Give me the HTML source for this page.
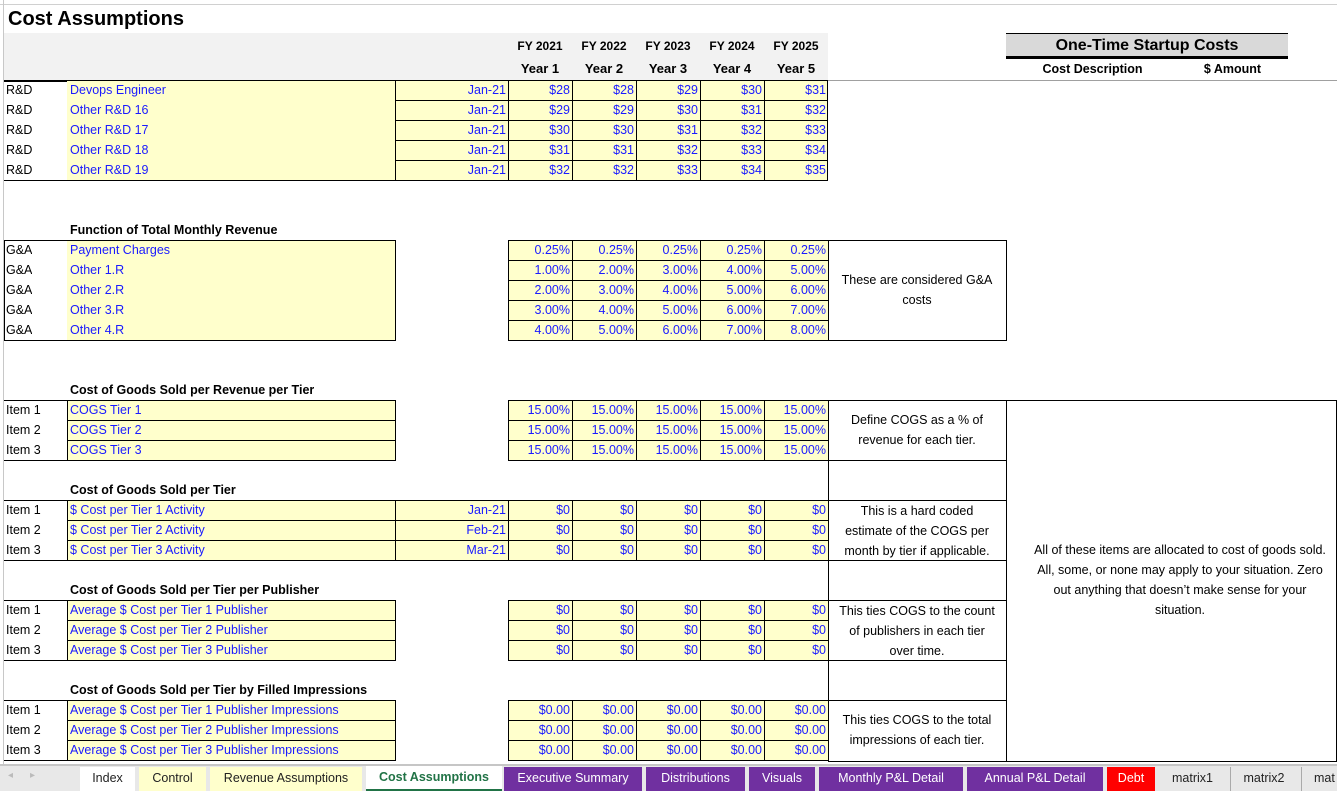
<!DOCTYPE html>
<html><head><meta charset="utf-8"><style>
*{margin:0;padding:0;box-sizing:border-box}
body{width:1337px;height:791px;overflow:hidden;background:#fff;position:relative;font-family:"Liberation Sans",Arial,sans-serif;font-size:12.5px;color:#000}
div{position:absolute}
.t{height:20px;line-height:19px;white-space:nowrap;overflow:hidden}
.y{background:#ffffcc}
.b{border:1px solid #000}
.bl{color:#1a1aff}
.r{text-align:right;padding-right:2px}
.h{font-weight:bold;font-size:12.5px}
.cal{font-family:"Liberation Sans",sans-serif;font-size:12.5px;text-align:center;line-height:20px}
.ln{background:#000;height:1px}
.vl{background:#000;width:1px}
.tab{top:767px;height:24px;line-height:23px;text-align:center;font-size:12.5px;color:#222}
.p{background:#7030a0;color:#fff}
</style></head><body>
<!-- top gridline remnants -->
<div style="left:0;top:0;width:1337px;height:5px;background:#fff;border-bottom:1px solid #d0d0d0"></div>
<div style="left:3;top:0;width:1px;height:765px;background:#c8c8c8;left:3px"></div>
<div class="h" style="left:8px;top:6px;font-size:20px;line-height:26px">Cost Assumptions</div>
<!-- header band -->
<div style="left:4px;top:33px;width:824px;height:47px;background:#f2f2f2"></div>
<div class="ln" style="left:4px;top:80px;width:824px;height:2px"></div>
<div style="left:828px;top:80px;width:509px;height:1px;background:#a0a0a0"></div>
<div class="h" style="left:508px;top:39px;width:64px;text-align:center;font-size:12px">FY 2021</div>
<div class="h" style="left:572px;top:39px;width:64px;text-align:center;font-size:12px">FY 2022</div>
<div class="h" style="left:636px;top:39px;width:64px;text-align:center;font-size:12px">FY 2023</div>
<div class="h" style="left:700px;top:39px;width:64px;text-align:center;font-size:12px">FY 2024</div>
<div class="h" style="left:764px;top:39px;width:64px;text-align:center;font-size:12px">FY 2025</div>
<div class="h" style="left:508px;top:61px;width:64px;text-align:center;font-size:13px">Year 1</div>
<div class="h" style="left:572px;top:61px;width:64px;text-align:center;font-size:13px">Year 2</div>
<div class="h" style="left:636px;top:61px;width:64px;text-align:center;font-size:13px">Year 3</div>
<div class="h" style="left:700px;top:61px;width:64px;text-align:center;font-size:13px">Year 4</div>
<div class="h" style="left:764px;top:61px;width:64px;text-align:center;font-size:13px">Year 5</div>
<!-- one-time -->
<div style="left:1006px;top:33px;width:282px;height:26px;background:#d9d9d9;border-top:1px solid #000;border-bottom:3px solid #000;text-align:center;font-weight:bold;font-size:16px;line-height:24px">One-Time Startup Costs</div>
<div class="h" style="left:1020px;top:62px;width:145px;text-align:center;font-size:12.5px">Cost Description</div>
<div class="h" style="left:1170px;top:62px;width:125px;text-align:center;font-size:12.5px">$ Amount</div>

<!-- R&D block -->
<div class="y" style="left:67px;top:81px;width:761px;height:100px"></div>
<div class="ln" style="left:4px;top:180px;width:824px"></div>
<div class="vl" style="left:395px;top:81px;height:100px"></div>
<div class="vl" style="left:508px;top:81px;height:100px"></div>
<div class="vl" style="left:572px;top:81px;height:100px"></div>
<div class="vl" style="left:636px;top:81px;height:100px"></div>
<div class="vl" style="left:700px;top:81px;height:100px"></div>
<div class="vl" style="left:764px;top:81px;height:100px"></div>
<div class="vl" style="left:827px;top:81px;height:100px"></div>
<div class="ln" style="left:395px;top:100px;width:433px"></div>
<div class="ln" style="left:395px;top:120px;width:433px"></div>
<div class="ln" style="left:395px;top:140px;width:433px"></div>
<div class="ln" style="left:395px;top:160px;width:433px"></div>

<div class="t" style="left:6px;top:81px">R&amp;D</div><div class="t bl" style="left:70px;top:81px">Devops Engineer</div>
<div class="t" style="left:6px;top:101px">R&amp;D</div><div class="t bl" style="left:70px;top:101px">Other R&amp;D 16</div>
<div class="t" style="left:6px;top:121px">R&amp;D</div><div class="t bl" style="left:70px;top:121px">Other R&amp;D 17</div>
<div class="t" style="left:6px;top:141px">R&amp;D</div><div class="t bl" style="left:70px;top:141px">Other R&amp;D 18</div>
<div class="t" style="left:6px;top:161px">R&amp;D</div><div class="t bl" style="left:70px;top:161px">Other R&amp;D 19</div>
<div class="t bl r" style="left:395px;top:81px;width:113px">Jan-21</div>
<div class="t bl r" style="left:395px;top:101px;width:113px">Jan-21</div>
<div class="t bl r" style="left:395px;top:121px;width:113px">Jan-21</div>
<div class="t bl r" style="left:395px;top:141px;width:113px">Jan-21</div>
<div class="t bl r" style="left:395px;top:161px;width:113px">Jan-21</div>
<div class="t bl r" style="left:508px;top:81px;width:64px">$28</div><div class="t bl r" style="left:572px;top:81px;width:64px">$28</div><div class="t bl r" style="left:636px;top:81px;width:64px">$29</div><div class="t bl r" style="left:700px;top:81px;width:64px">$30</div><div class="t bl r" style="left:764px;top:81px;width:64px">$31</div>
<div class="t bl r" style="left:508px;top:101px;width:64px">$29</div><div class="t bl r" style="left:572px;top:101px;width:64px">$29</div><div class="t bl r" style="left:636px;top:101px;width:64px">$30</div><div class="t bl r" style="left:700px;top:101px;width:64px">$31</div><div class="t bl r" style="left:764px;top:101px;width:64px">$32</div>
<div class="t bl r" style="left:508px;top:121px;width:64px">$30</div><div class="t bl r" style="left:572px;top:121px;width:64px">$30</div><div class="t bl r" style="left:636px;top:121px;width:64px">$31</div><div class="t bl r" style="left:700px;top:121px;width:64px">$32</div><div class="t bl r" style="left:764px;top:121px;width:64px">$33</div>
<div class="t bl r" style="left:508px;top:141px;width:64px">$31</div><div class="t bl r" style="left:572px;top:141px;width:64px">$31</div><div class="t bl r" style="left:636px;top:141px;width:64px">$32</div><div class="t bl r" style="left:700px;top:141px;width:64px">$33</div><div class="t bl r" style="left:764px;top:141px;width:64px">$34</div>
<div class="t bl r" style="left:508px;top:161px;width:64px">$32</div><div class="t bl r" style="left:572px;top:161px;width:64px">$32</div><div class="t bl r" style="left:636px;top:161px;width:64px">$33</div><div class="t bl r" style="left:700px;top:161px;width:64px">$34</div><div class="t bl r" style="left:764px;top:161px;width:64px">$35</div>

<!-- G&A -->
<div class="t h" style="left:70px;top:221px">Function of Total Monthly Revenue</div>
<div class="b" style="left:4px;top:240px;width:392px;height:101px"></div>
<div class="y" style="left:67px;top:241px;width:328px;height:99px"></div>
<div class="y b" style="left:508px;top:240px;width:321px;height:101px"></div>
<div class="vl" style="left:572px;top:241px;height:100px"></div>
<div class="vl" style="left:636px;top:241px;height:100px"></div>
<div class="vl" style="left:700px;top:241px;height:100px"></div>
<div class="vl" style="left:764px;top:241px;height:100px"></div>
<div class="ln" style="left:508px;top:260px;width:320px"></div>
<div class="ln" style="left:508px;top:280px;width:320px"></div>
<div class="ln" style="left:508px;top:300px;width:320px"></div>
<div class="ln" style="left:508px;top:320px;width:320px"></div>
<div class="b" style="left:828px;top:240px;width:179px;height:101px"></div>
<div class="cal" style="left:828px;top:270px;width:178px">These are considered G&amp;A<br>costs</div>
<div class="t" style="left:6px;top:241px">G&amp;A</div><div class="t bl" style="left:70px;top:241px">Payment Charges</div>
<div class="t" style="left:6px;top:261px">G&amp;A</div><div class="t bl" style="left:70px;top:261px">Other 1.R</div>
<div class="t" style="left:6px;top:281px">G&amp;A</div><div class="t bl" style="left:70px;top:281px">Other 2.R</div>
<div class="t" style="left:6px;top:301px">G&amp;A</div><div class="t bl" style="left:70px;top:301px">Other 3.R</div>
<div class="t" style="left:6px;top:321px">G&amp;A</div><div class="t bl" style="left:70px;top:321px">Other 4.R</div>
<div class="t bl r" style="left:508px;top:241px;width:64px">0.25%</div><div class="t bl r" style="left:572px;top:241px;width:64px">0.25%</div><div class="t bl r" style="left:636px;top:241px;width:64px">0.25%</div><div class="t bl r" style="left:700px;top:241px;width:64px">0.25%</div><div class="t bl r" style="left:764px;top:241px;width:64px">0.25%</div>
<div class="t bl r" style="left:508px;top:261px;width:64px">1.00%</div><div class="t bl r" style="left:572px;top:261px;width:64px">2.00%</div><div class="t bl r" style="left:636px;top:261px;width:64px">3.00%</div><div class="t bl r" style="left:700px;top:261px;width:64px">4.00%</div><div class="t bl r" style="left:764px;top:261px;width:64px">5.00%</div>
<div class="t bl r" style="left:508px;top:281px;width:64px">2.00%</div><div class="t bl r" style="left:572px;top:281px;width:64px">3.00%</div><div class="t bl r" style="left:636px;top:281px;width:64px">4.00%</div><div class="t bl r" style="left:700px;top:281px;width:64px">5.00%</div><div class="t bl r" style="left:764px;top:281px;width:64px">6.00%</div>
<div class="t bl r" style="left:508px;top:301px;width:64px">3.00%</div><div class="t bl r" style="left:572px;top:301px;width:64px">4.00%</div><div class="t bl r" style="left:636px;top:301px;width:64px">5.00%</div><div class="t bl r" style="left:700px;top:301px;width:64px">6.00%</div><div class="t bl r" style="left:764px;top:301px;width:64px">7.00%</div>
<div class="t bl r" style="left:508px;top:321px;width:64px">4.00%</div><div class="t bl r" style="left:572px;top:321px;width:64px">5.00%</div><div class="t bl r" style="left:636px;top:321px;width:64px">6.00%</div><div class="t bl r" style="left:700px;top:321px;width:64px">7.00%</div><div class="t bl r" style="left:764px;top:321px;width:64px">8.00%</div>

<!-- comment column boxes -->
<div class="b" style="left:828px;top:400px;width:509px;height:362px"></div>
<div class="vl" style="left:1006px;top:400px;height:362px"></div>
<div class="ln" style="left:828px;top:460px;width:178px"></div>
<div class="ln" style="left:828px;top:500px;width:178px"></div>
<div class="ln" style="left:828px;top:560px;width:178px"></div>
<div class="ln" style="left:828px;top:600px;width:178px"></div>
<div class="ln" style="left:828px;top:660px;width:178px"></div>
<div class="ln" style="left:828px;top:700px;width:178px"></div>
<div class="cal" style="left:828px;top:410px;width:178px">Define COGS as a % of<br>revenue for each tier.</div>
<div class="cal" style="left:828px;top:501px;width:178px">This is a hard coded<br>estimate of the COGS per<br>month by tier if applicable.</div>
<div class="cal" style="left:828px;top:601px;width:178px">This ties COGS to the count<br>of publishers in each tier<br>over time.</div>
<div class="cal" style="left:828px;top:710px;width:178px">This ties COGS to the total<br>impressions of each tier.</div>
<div class="cal" style="left:1008px;top:540px;width:344px">All of these items are allocated to cost of goods sold.<br>All, some, or none may apply to your situation. Zero<br>out anything that doesn’t make sense for your<br>situation.</div>

<!-- COGS section 1 -->
<div class="t h" style="left:70px;top:381px">Cost of Goods Sold per Revenue per Tier</div>
<div class="ln" style="left:4px;top:400px;width:392px"></div>
<div class="ln" style="left:4px;top:460px;width:392px"></div>
<div class="y b" style="left:67px;top:400px;width:329px;height:21px"></div>
<div class="y b" style="left:67px;top:420px;width:329px;height:21px"></div>
<div class="y b" style="left:67px;top:440px;width:329px;height:21px"></div>
<div class="t" style="left:6px;top:401px">Item 1</div><div class="t bl" style="left:70px;top:401px">COGS Tier 1</div>
<div class="t" style="left:6px;top:421px">Item 2</div><div class="t bl" style="left:70px;top:421px">COGS Tier 2</div>
<div class="t" style="left:6px;top:441px">Item 3</div><div class="t bl" style="left:70px;top:441px">COGS Tier 3</div>
<div class="y b" style="left:508px;top:400px;width:321px;height:61px"></div>
<div class="vl" style="left:572px;top:401px;height:60px"></div><div class="vl" style="left:636px;top:401px;height:60px"></div><div class="vl" style="left:700px;top:401px;height:60px"></div><div class="vl" style="left:764px;top:401px;height:60px"></div>
<div class="ln" style="left:508px;top:420px;width:320px"></div><div class="ln" style="left:508px;top:440px;width:320px"></div>
<div class="t bl r" style="left:508px;top:401px;width:64px">15.00%</div><div class="t bl r" style="left:572px;top:401px;width:64px">15.00%</div><div class="t bl r" style="left:636px;top:401px;width:64px">15.00%</div><div class="t bl r" style="left:700px;top:401px;width:64px">15.00%</div><div class="t bl r" style="left:764px;top:401px;width:64px">15.00%</div>
<div class="t bl r" style="left:508px;top:421px;width:64px">15.00%</div><div class="t bl r" style="left:572px;top:421px;width:64px">15.00%</div><div class="t bl r" style="left:636px;top:421px;width:64px">15.00%</div><div class="t bl r" style="left:700px;top:421px;width:64px">15.00%</div><div class="t bl r" style="left:764px;top:421px;width:64px">15.00%</div>
<div class="t bl r" style="left:508px;top:441px;width:64px">15.00%</div><div class="t bl r" style="left:572px;top:441px;width:64px">15.00%</div><div class="t bl r" style="left:636px;top:441px;width:64px">15.00%</div><div class="t bl r" style="left:700px;top:441px;width:64px">15.00%</div><div class="t bl r" style="left:764px;top:441px;width:64px">15.00%</div>

<!-- COGS section 2 -->
<div class="t h" style="left:70px;top:481px">Cost of Goods Sold per Tier</div>
<div class="ln" style="left:4px;top:500px;width:505px"></div>
<div class="ln" style="left:4px;top:560px;width:505px"></div>
<div class="y b" style="left:67px;top:500px;width:329px;height:21px"></div>
<div class="y b" style="left:67px;top:520px;width:329px;height:21px"></div>
<div class="y b" style="left:67px;top:540px;width:329px;height:21px"></div>
<div class="y b" style="left:395px;top:500px;width:114px;height:21px"></div>
<div class="y b" style="left:395px;top:520px;width:114px;height:21px"></div>
<div class="y b" style="left:395px;top:540px;width:114px;height:21px"></div>
<div class="t" style="left:6px;top:501px">Item 1</div><div class="t bl" style="left:70px;top:501px">$ Cost per Tier 1 Activity</div>
<div class="t" style="left:6px;top:521px">Item 2</div><div class="t bl" style="left:70px;top:521px">$ Cost per Tier 2 Activity</div>
<div class="t" style="left:6px;top:541px">Item 3</div><div class="t bl" style="left:70px;top:541px">$ Cost per Tier 3 Activity</div>
<div class="t bl r" style="left:395px;top:501px;width:113px">Jan-21</div>
<div class="t bl r" style="left:395px;top:521px;width:113px">Feb-21</div>
<div class="t bl r" style="left:395px;top:541px;width:113px">Mar-21</div>
<div class="y b" style="left:508px;top:500px;width:321px;height:61px"></div>
<div class="vl" style="left:572px;top:501px;height:60px"></div><div class="vl" style="left:636px;top:501px;height:60px"></div><div class="vl" style="left:700px;top:501px;height:60px"></div><div class="vl" style="left:764px;top:501px;height:60px"></div>
<div class="ln" style="left:508px;top:520px;width:320px"></div><div class="ln" style="left:508px;top:540px;width:320px"></div>
<div class="t bl r" style="left:508px;top:501px;width:64px">$0</div><div class="t bl r" style="left:572px;top:501px;width:64px">$0</div><div class="t bl r" style="left:636px;top:501px;width:64px">$0</div><div class="t bl r" style="left:700px;top:501px;width:64px">$0</div><div class="t bl r" style="left:764px;top:501px;width:64px">$0</div>
<div class="t bl r" style="left:508px;top:521px;width:64px">$0</div><div class="t bl r" style="left:572px;top:521px;width:64px">$0</div><div class="t bl r" style="left:636px;top:521px;width:64px">$0</div><div class="t bl r" style="left:700px;top:521px;width:64px">$0</div><div class="t bl r" style="left:764px;top:521px;width:64px">$0</div>
<div class="t bl r" style="left:508px;top:541px;width:64px">$0</div><div class="t bl r" style="left:572px;top:541px;width:64px">$0</div><div class="t bl r" style="left:636px;top:541px;width:64px">$0</div><div class="t bl r" style="left:700px;top:541px;width:64px">$0</div><div class="t bl r" style="left:764px;top:541px;width:64px">$0</div>

<!-- COGS section 3 -->
<div class="t h" style="left:70px;top:581px">Cost of Goods Sold per Tier per Publisher</div>
<div class="ln" style="left:4px;top:600px;width:392px"></div>
<div class="ln" style="left:4px;top:660px;width:392px"></div>
<div class="y b" style="left:67px;top:600px;width:329px;height:21px"></div>
<div class="y b" style="left:67px;top:620px;width:329px;height:21px"></div>
<div class="y b" style="left:67px;top:640px;width:329px;height:21px"></div>
<div class="t" style="left:6px;top:601px">Item 1</div><div class="t bl" style="left:70px;top:601px">Average $ Cost per Tier 1 Publisher</div>
<div class="t" style="left:6px;top:621px">Item 2</div><div class="t bl" style="left:70px;top:621px">Average $ Cost per Tier 2 Publisher</div>
<div class="t" style="left:6px;top:641px">Item 3</div><div class="t bl" style="left:70px;top:641px">Average $ Cost per Tier 3 Publisher</div>
<div class="y b" style="left:508px;top:600px;width:321px;height:61px"></div>
<div class="vl" style="left:572px;top:601px;height:60px"></div><div class="vl" style="left:636px;top:601px;height:60px"></div><div class="vl" style="left:700px;top:601px;height:60px"></div><div class="vl" style="left:764px;top:601px;height:60px"></div>
<div class="ln" style="left:508px;top:620px;width:320px"></div><div class="ln" style="left:508px;top:640px;width:320px"></div>
<div class="t bl r" style="left:508px;top:601px;width:64px">$0</div><div class="t bl r" style="left:572px;top:601px;width:64px">$0</div><div class="t bl r" style="left:636px;top:601px;width:64px">$0</div><div class="t bl r" style="left:700px;top:601px;width:64px">$0</div><div class="t bl r" style="left:764px;top:601px;width:64px">$0</div>
<div class="t bl r" style="left:508px;top:621px;width:64px">$0</div><div class="t bl r" style="left:572px;top:621px;width:64px">$0</div><div class="t bl r" style="left:636px;top:621px;width:64px">$0</div><div class="t bl r" style="left:700px;top:621px;width:64px">$0</div><div class="t bl r" style="left:764px;top:621px;width:64px">$0</div>
<div class="t bl r" style="left:508px;top:641px;width:64px">$0</div><div class="t bl r" style="left:572px;top:641px;width:64px">$0</div><div class="t bl r" style="left:636px;top:641px;width:64px">$0</div><div class="t bl r" style="left:700px;top:641px;width:64px">$0</div><div class="t bl r" style="left:764px;top:641px;width:64px">$0</div>

<!-- COGS section 4 -->
<div class="t h" style="left:70px;top:681px">Cost of Goods Sold per Tier by Filled Impressions</div>
<div class="ln" style="left:4px;top:700px;width:392px"></div>
<div class="ln" style="left:4px;top:760px;width:392px"></div>
<div class="y b" style="left:67px;top:700px;width:329px;height:21px"></div>
<div class="y b" style="left:67px;top:720px;width:329px;height:21px"></div>
<div class="y b" style="left:67px;top:740px;width:329px;height:21px"></div>
<div class="t" style="left:6px;top:701px">Item 1</div><div class="t bl" style="left:70px;top:701px">Average $ Cost per Tier 1 Publisher Impressions</div>
<div class="t" style="left:6px;top:721px">Item 2</div><div class="t bl" style="left:70px;top:721px">Average $ Cost per Tier 2 Publisher Impressions</div>
<div class="t" style="left:6px;top:741px">Item 3</div><div class="t bl" style="left:70px;top:741px">Average $ Cost per Tier 3 Publisher Impressions</div>
<div class="y b" style="left:508px;top:700px;width:321px;height:61px"></div>
<div class="vl" style="left:572px;top:701px;height:60px"></div><div class="vl" style="left:636px;top:701px;height:60px"></div><div class="vl" style="left:700px;top:701px;height:60px"></div><div class="vl" style="left:764px;top:701px;height:60px"></div>
<div class="ln" style="left:508px;top:720px;width:320px"></div><div class="ln" style="left:508px;top:740px;width:320px"></div>
<div class="t bl r" style="left:508px;top:701px;width:64px">$0.00</div><div class="t bl r" style="left:572px;top:701px;width:64px">$0.00</div><div class="t bl r" style="left:636px;top:701px;width:64px">$0.00</div><div class="t bl r" style="left:700px;top:701px;width:64px">$0.00</div><div class="t bl r" style="left:764px;top:701px;width:64px">$0.00</div>
<div class="t bl r" style="left:508px;top:721px;width:64px">$0.00</div><div class="t bl r" style="left:572px;top:721px;width:64px">$0.00</div><div class="t bl r" style="left:636px;top:721px;width:64px">$0.00</div><div class="t bl r" style="left:700px;top:721px;width:64px">$0.00</div><div class="t bl r" style="left:764px;top:721px;width:64px">$0.00</div>
<div class="t bl r" style="left:508px;top:741px;width:64px">$0.00</div><div class="t bl r" style="left:572px;top:741px;width:64px">$0.00</div><div class="t bl r" style="left:636px;top:741px;width:64px">$0.00</div><div class="t bl r" style="left:700px;top:741px;width:64px">$0.00</div><div class="t bl r" style="left:764px;top:741px;width:64px">$0.00</div>

<!-- tab bar -->
<div style="left:0;top:764px;width:1337px;height:27px;background:#e8e8e8;border-top:2px solid #c6c6c6"></div>
<div style="left:8px;top:770px;color:#bbb;font-size:10px">◂</div>
<div style="left:30px;top:770px;color:#bbb;font-size:10px">▸</div>
<div class="tab" style="left:80px;width:55px;background:#fff">Index</div>
<div class="tab" style="left:139px;width:67px;background:#ffffcc">Control</div>
<div class="tab" style="left:210px;width:152px;background:#ffffcc">Revenue Assumptions</div>
<div class="tab" style="left:366px;width:136px;top:766px;height:25px;background:#fff;color:#217346;font-weight:bold;border-bottom:2px solid #217346">Cost Assumptions</div>
<div class="tab p" style="left:504px;width:138px">Executive Summary</div>
<div class="tab p" style="left:646px;width:99px">Distributions</div>
<div class="tab p" style="left:749px;width:66px">Visuals</div>
<div class="tab p" style="left:819px;width:144px">Monthly P&amp;L Detail</div>
<div class="tab p" style="left:967px;width:136px">Annual P&amp;L Detail</div>
<div class="tab" style="left:1107px;width:48px;background:#ff0000;color:#fff">Debt</div>
<div class="tab" style="left:1159px;width:67px">matrix1</div>
<div class="tab" style="left:1230px;width:67px;border-left:1px solid #aaa">matrix2</div>
<div class="tab" style="left:1301px;width:40px;border-left:1px solid #aaa;text-align:left;padding-left:12px">mat</div>
</body></html>
